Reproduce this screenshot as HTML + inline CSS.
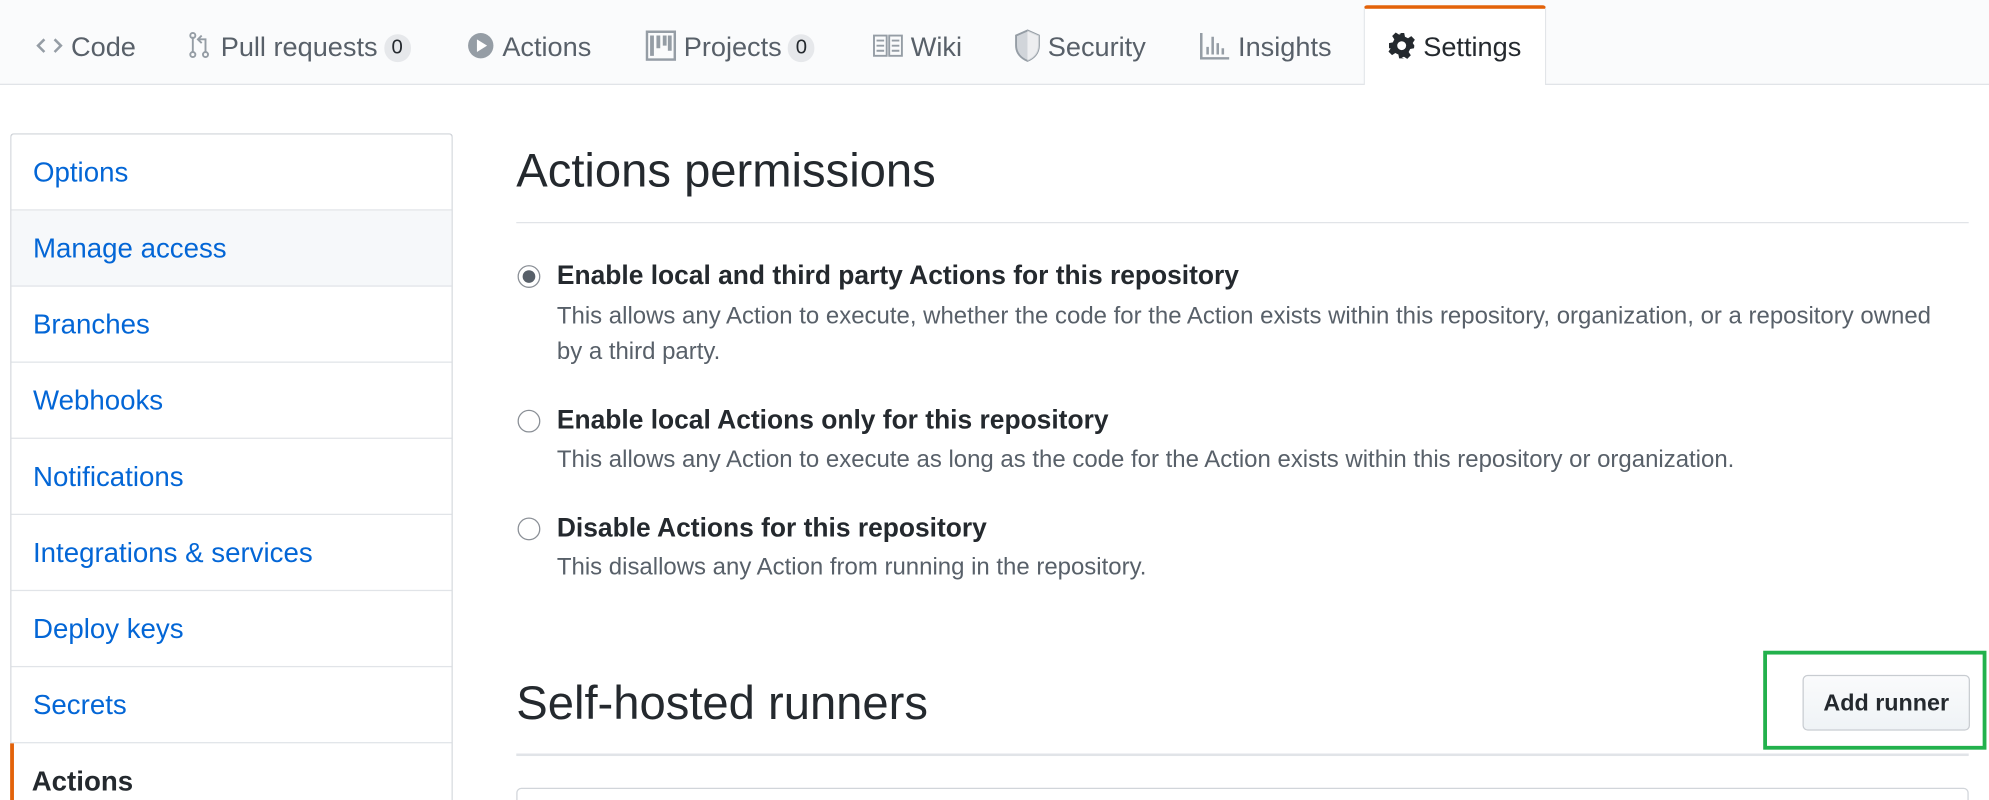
<!DOCTYPE html>
<html><head><meta charset="utf-8"><style>
html,body{margin:0;padding:0;background:#fff;overflow:hidden;width:1989px;height:800px}
#w{width:1568px;height:631px;transform:scale(1.26849);transform-origin:0 0;position:relative;font-family:"Liberation Sans",sans-serif}
.tabs{position:absolute;left:0;top:0;width:1568px;height:66px;background:#fafbfc;border-bottom:1px solid #e1e4e8}
.t{position:absolute;top:24px;font-size:21.4px;color:#586069;white-space:nowrap;line-height:26px;height:26px}
.t svg{vertical-align:middle;margin-right:6px;margin-top:-4px}
.cnt{display:inline-block;background:#e6e8eb;color:#24292e;border-radius:12px;font-size:16px;padding:0 6px;line-height:22px;margin-left:5px;vertical-align:2px}
.sel{position:absolute;left:1075px;top:4px;width:144px;height:63px;background:#fff;border:1px solid #e1e4e8;border-bottom:none;border-top:3px solid #e36209;border-radius:3px 3px 0 0;box-sizing:border-box}
.side{position:absolute;left:8px;top:105px;width:347px;border:1px solid #d1d5da;border-radius:3px;border-bottom:none}
.side div{height:59px;border-bottom:1px solid #e1e4e8;font-size:21.8px;color:#0366d6;line-height:60px;padding-left:17px}
h2{position:absolute;left:407px;margin:0;font-weight:normal;font-size:37.2px;color:#24292e;white-space:nowrap}
.hr{position:absolute;left:407px;width:1145px;height:1px;background:#e1e4e8}
.r{position:absolute;left:408px;width:18px;height:18px;border:1px solid #8a8f96;border-radius:50%;background:#fff;box-sizing:border-box}
.lb{position:absolute;left:439px;font-size:20.8px;font-weight:bold;color:#24292e;white-space:nowrap}
.ds{position:absolute;left:439px;font-size:18.9px;color:#586069;line-height:28px;width:1100px}
</style></head><body><div id="w">
<div class="tabs"></div>
<div class="sel"></div>
<div class="t" style="left:28px"><svg width="22" height="16" viewBox="0 0 22 16"><path d="M7 3 2 8l5 5M15 3l5 5-5 5" stroke="#959da5" stroke-width="2" fill="none"/></svg>Code</div>
<div class="t" style="left:148px"><svg width="20" height="22" viewBox="0 0 20 22"><circle cx="4" cy="18" r="2" stroke="#959da5" stroke-width="1.5" fill="none"/><circle cx="14" cy="18" r="2" stroke="#959da5" stroke-width="1.5" fill="none"/><path d="M4 4v12M14 16V6H9M11 3 8 6l3 3" stroke="#959da5" stroke-width="1.5" fill="none"/><circle cx="4" cy="3" r="2" stroke="#959da5" stroke-width="1.5" fill="none"/></svg>Pull requests<span class="cnt">0</span></div>
<div class="t" style="left:368px"><svg width="22" height="22" viewBox="0 0 22 22"><circle cx="11" cy="11" r="10" fill="#959da5"/><path d="M8 6v10l8-5z" fill="#fff"/></svg>Actions</div>
<div class="t" style="left:509px"><svg width="24" height="24" viewBox="0 0 24 24"><rect x="1" y="1" width="22" height="22" fill="none" stroke="#959da5" stroke-width="2"/><path d="M5 4v16M10 4v10M15 4v8M19 4v12" stroke="#959da5" stroke-width="3"/></svg>Projects<span class="cnt">0</span></div>
<div class="t" style="left:688px"><svg width="24" height="20" viewBox="0 0 24 20"><path d="M1 2h10v16H1zM13 2h10v16H13zM3 6h6M3 10h6M3 14h6M15 6h6M15 10h6M15 14h6" stroke="#959da5" stroke-width="1.5" fill="none"/></svg>Wiki</div>
<div class="t" style="left:800px"><svg width="20" height="26" viewBox="0 0 20 26"><path d="M10 1 1 5v8c0 6 4 10 9 12 5-2 9-6 9-12V5z" fill="#d1d5da" stroke="#959da5" stroke-width="1.5"/><path d="M10 1v24c5-2 9-6 9-12V5z" fill="#fff" opacity=".6"/></svg>Security</div>
<div class="t" style="left:946px"><svg width="24" height="22" viewBox="0 0 24 22"><path d="M1 1v20h22M6 18v-6M10 18V4M14 18V9M18 18v-5" stroke="#959da5" stroke-width="2" fill="none"/></svg>Insights</div>
<div class="t" style="left:1094px;color:#24292e"><svg width="22" height="22" viewBox="0 0 22 22"><path d="M9 1h4l.6 3 2.4 1.2 2.6-1.7 2.8 2.8-1.7 2.6L21 11l-.3 2-3 .6-1.2 2.4 1.7 2.6-2.8 2.8-2.6-1.7-1.8.7L13 21H9l-.6-3-2.4-1.2-2.6 1.7-2.8-2.8 1.7-2.6L1 13V9l3-.6 1.2-2.4-1.7-2.6 2.8-2.8 2.6 1.7 1.8-.7z" fill="#24292e"/><circle cx="11" cy="11" r="3.5" fill="#fff"/></svg>Settings</div>
<div class="side">
<div>Options</div><div style="background:#f6f8fa">Manage access</div><div>Branches</div><div>Webhooks</div><div>Notifications</div><div>Integrations &amp; services</div><div>Deploy keys</div><div>Secrets</div>
<div style="color:#24292e;font-weight:bold;border-left:3px solid #e36209;padding-left:14px;margin-left:-1px">Actions</div>
</div>
<h2 style="top:113px">Actions permissions</h2>
<div class="hr" style="top:175px"></div>
<div class="r" style="top:209px"><div style="width:10px;height:10px;border-radius:50%;background:#586069;margin:3px"></div></div>
<div class="lb" style="top:206px">Enable local and third party Actions for this repository</div>
<div class="ds" style="top:236px">This allows any Action to execute, whether the code for the Action exists within this repository, organization, or a repository owned by a third party.</div>
<div class="r" style="top:323px"></div>
<div class="lb" style="top:320px">Enable local Actions only for this repository</div>
<div class="ds" style="top:349px">This allows any Action to execute as long as the code for the Action exists within this repository or organization.</div>
<div class="r" style="top:408px"></div>
<div class="lb" style="top:405px">Disable Actions for this repository</div>
<div class="ds" style="top:434px">This disallows any Action from running in the repository.</div>
<h2 style="top:533px">Self-hosted runners</h2>
<div class="hr" style="top:594px;height:2px"></div>
<div style="position:absolute;left:1390px;top:513px;width:176px;height:78px;border:3px solid #22b14c;box-sizing:border-box"></div>
<div style="position:absolute;left:1421px;top:532px;width:132px;height:44px;box-sizing:border-box;border:1px solid #c8ccd1;border-radius:4px;background:linear-gradient(#fafbfc,#eff3f6);font-size:18.4px;font-weight:bold;color:#24292e;text-align:center;line-height:42px">Add runner</div>
<div style="position:absolute;left:407px;top:621px;width:1145px;height:20px;border:1px solid #d1d5da;border-radius:4px;box-sizing:border-box"></div>
</div></body></html>
